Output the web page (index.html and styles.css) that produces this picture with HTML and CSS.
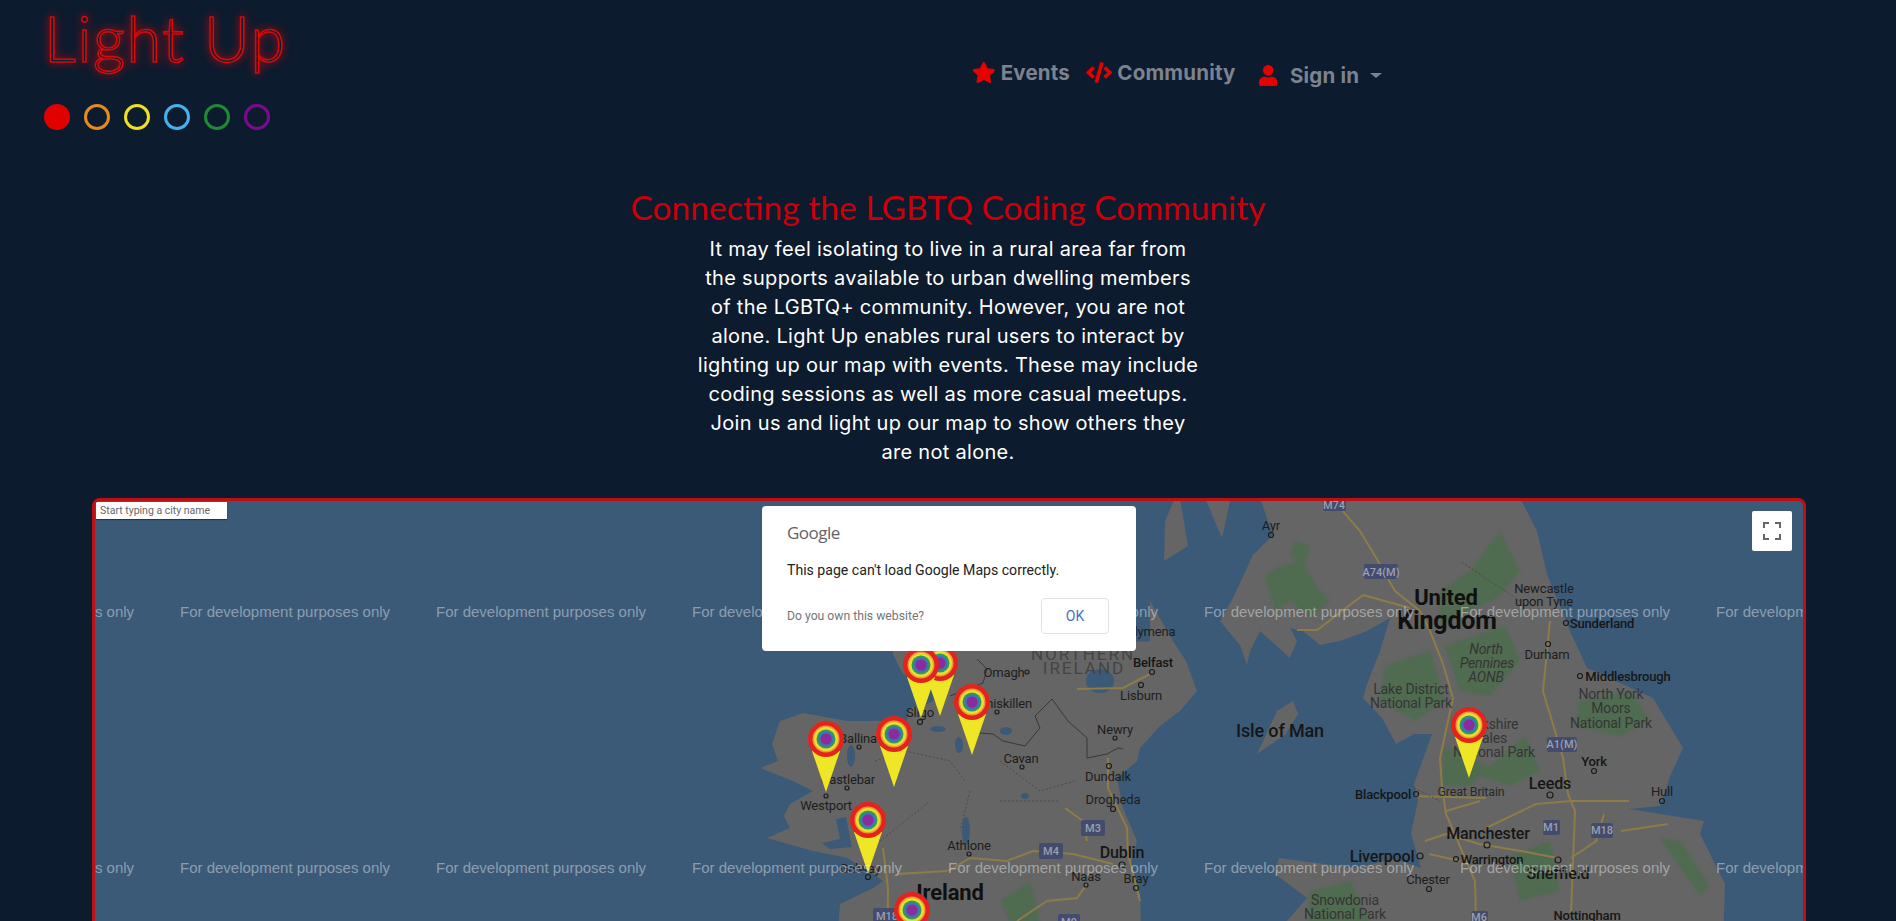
FILE: index.html
```html
<!DOCTYPE html>
<html lang="en">
<head>
    <meta charset="UTF-8">
    <title>Light Up</title>
    <link rel="stylesheet" href="styles.css">
</head>
<body>
<header class="top">
    <div class="brand">
        <h1 class="logo">Light Up</h1>
        <div class="dots">
            <span class="dot red"></span>
            <span class="dot orange"></span>
            <span class="dot yellow"></span>
            <span class="dot blue"></span>
            <span class="dot green"></span>
            <span class="dot purple"></span>
        </div>
    </div>
    <nav class="nav">
        <a class="nav-link">
            <svg class="ico ico-star" viewBox="0 0 576 512"><path d="M259.3 17.8L194 150.2 47.9 171.5c-26.2 3.8-36.7 36.1-17.7 54.6l105.7 103-25 145.5c-4.5 26.3 23.2 46 46.4 33.7L288 439.6l130.7 68.7c23.2 12.2 50.9-7.4 46.4-33.7l-25-145.5 105.7-103c19-18.5 8.5-50.8-17.7-54.6L382 150.2 316.7 17.8c-11.7-23.6-45.6-23.9-57.4 0z"/></svg>
            Events
        </a>
        <a class="nav-link">
            <svg class="ico ico-code" viewBox="0 0 640 512"><path d="M278.9 511.5l-61-17.7c-6.4-1.8-10-8.5-8.2-14.9L346.2 8.7c1.8-6.4 8.5-10 14.9-8.2l61 17.7c6.4 1.8 10 8.5 8.2 14.9L293.8 503.3c-1.9 6.4-8.5 10.1-14.9 8.2zm-114-112.2l43.5-46.4c4.6-4.9 4.3-12.7-.8-17.2L117 256l90.6-79.7c5.1-4.5 5.5-12.3.8-17.2l-43.5-46.4c-4.5-4.8-12.1-5.1-17-.5L3.8 247.2c-5.1 4.7-5.1 12.8 0 17.5l144.1 135.1c4.9 4.6 12.5 4.4 17-.5zm327.2.6l144.1-135.1c5.1-4.7 5.1-12.8 0-17.5L492.1 112.1c-4.8-4.5-12.4-4.3-17 .5L431.6 159c-4.6 4.9-4.3 12.7.8 17.2L523 256l-90.6 79.7c-5.1 4.5-5.5 12.3-.8 17.2l43.5 46.4c4.5 4.9 12.1 5.1 17 .6z"/></svg>
            Community
        </a>
        <a class="nav-link sign-in">
            <svg class="ico ico-user" viewBox="0 0 448 512"><path d="M224 256c70.7 0 128-57.3 128-128S294.7 0 224 0 96 57.3 96 128s57.3 128 128 128zm89.6 32h-16.7c-22.2 10.2-46.9 16-72.9 16s-50.6-5.8-72.9-16h-16.7C60.2 288 0 348.2 0 422.4V464c0 26.5 21.5 48 48 48h352c26.5 0 48-21.5 48-48v-41.6c0-74.2-60.2-134.4-134.4-134.4z"/></svg>
            Sign in
            <span class="caret"></span>
        </a>
    </nav>
</header>

<section class="intro">
    <h2>Connecting the LGBTQ Coding Community</h2>
    <p>
        It may feel isolating to live in a rural area far from<br>
        the supports available to urban dwelling members<br>
        of the LGBTQ+ community. However, you are not<br>
        alone. Light Up enables rural users to interact by<br>
        lighting up our map with events. These may include<br>
        coding sessions as well as more casual meetups.<br>
        Join us and light up our map to show others they<br>
        are not alone.
    </p>
</section>

<section class="map">
    <svg class="map-art" viewBox="95 500 1708 500">
        <defs>
            <g id="pin">
                <polygon class="pin-tail" points="-14,12 14,12 0,53"/>
                <circle r="18" fill="#e4241c"/>
                <circle r="13.5" fill="#ee9a35"/>
                <circle r="12" fill="#e9dd32"/>
                <circle r="9.5" fill="#2f9a5c"/>
                <circle r="7.5" fill="#3f72b4"/>
                <circle r="5.5" fill="#8c2a9e"/>
            </g>
        </defs>

        <!-- land -->
        <path class="land" d="M893 645L1173 640L1186 660L1197 690L1180 710L1160 725L1140 747L1137 760L1117 777L1123 807L1137 840L1130 867L1140 893L1143 1000L833 1000L840 903L873 887L883 880L873 873L847 857L813 850L767 837L790 827L784 815L790 803L813 790L793 780L760 767L778 760L772 743L780 720L803 712L847 720L873 720L907 720L910 707L927 703L947 693L903 673L893 653Z"/>
        <path class="land" d="M1150 600L1173 640L1150 650Z"/>
        <path class="land" d="M1260 497L1273 534L1253 554L1233 597L1220 620L1240 644L1247 664L1250 650L1260 630L1290 657L1297 640L1290 627L1303 630L1320 644L1340 640L1367 630L1390 617L1380 650L1367 683L1363 697L1382 717L1396 743L1414 733L1432 733L1414 783L1418 800L1411 833L1421 867L1395 858L1354 867L1279 857L1275 873L1307 897L1286 921L1280 1000L1721 1000L1725 883L1700 833L1704 820L1629 808L1660 805L1671 773L1683 747L1653 697L1587 667L1570 630L1547 573L1537 530L1520 497Z"/>
        <path class="land" d="M1175 497L1165 520L1164 560L1188 545L1180 497Z"/>
        <path class="land" d="M1205 497L1222 537L1230 500L1228 497Z"/>
        <path class="land" d="M1293 700L1277 710L1257 753L1286 733L1298 713Z"/>

        <!-- parks and forest -->
        <g class="parks">
            <path d="M1265 575L1280 565L1300 560L1320 590L1330 600L1310 615L1290 600L1275 610Z"/>
            <path d="M1295 540L1310 545L1305 565L1290 555Z"/>
            <path d="M1440 590L1470 570L1500 530L1520 570L1500 595L1470 610L1440 625Z"/>
            <path d="M1445 645L1505 625L1520 660L1490 695L1460 690Z"/>
            <path d="M1385 665L1430 650L1445 700L1415 720L1380 700Z"/>
            <path d="M1445 745L1490 765L1525 735L1540 770L1510 785L1480 775L1470 785L1442 785Z"/>
            <path d="M1580 700L1630 690L1650 720L1620 735L1575 725Z"/>
            <path d="M1510 855L1550 840L1560 890L1520 900Z"/>
            <path d="M1660 837L1680 840L1710 885L1700 895Z"/>
            <path d="M1310 890L1350 880L1370 921L1360 1000L1305 1000Z"/>
            <path d="M1000 900L1030 880L1040 921L1010 921Z"/>
        </g>

        <!-- lakes -->
        <ellipse class="water" cx="1100" cy="680" rx="14" ry="12"/>
        <ellipse class="water" cx="851" cy="755" rx="4" ry="11"/>
        <path class="water" d="M836 818L846 816L852 846L830 848L822 842L840 838Z"/>
        <ellipse class="water" cx="966" cy="830" rx="4" ry="14"/>
        <ellipse class="water" cx="959" cy="744" rx="4" ry="8"/>
        <ellipse class="water" cx="1006" cy="730" rx="6" ry="4"/>
        <ellipse class="water" cx="938" cy="728" rx="8" ry="3"/>
        <ellipse class="water" cx="1025" cy="795" rx="4" ry="3"/>

        <!-- roads -->
        <path class="road" d="M1065 807L1083 820L1087 840M948 870L970 857L1007 860L1033 850L1073 853L1113 863M897 873L947 870M887 1000L888 887L883 847M1017 920L1047 900L1077 897L1087 883M1108 757L1108 787L1127 827L1128 853L1140 900M1077 688L1123 687L1150 673"/>
        <path class="road" d="M1334 500L1360 530L1378 560L1395 590L1420 610L1430 630L1443 663L1453 697L1440 757L1442 787L1446 813L1475 880L1478 1000M1550 620L1543 690L1563 757L1568 793L1575 810L1571 913M1414 795L1486 797M1446 810L1480 800M1486 827L1536 803L1571 800L1629 800M1604 813L1596 840L1571 857M1425 840L1446 833L1479 843L1521 850L1557 857M1429 853L1460 860M1621 830L1668 823M1363 594L1410 607M1297 629L1317 629L1333 617L1363 594"/>
        <path class="border" d="M977 658L987 668L983 682L950 695M980 732L993 733L1003 740L1025 745L1040 727L1035 715L1052 698L1068 720L1087 737L1087 757L1107 753L1118 747L1123 748"/>
        <path class="county" d="M875 760L905 750L950 760L965 780M1000 760L1040 790L1075 780M970 790L960 830M1000 800L1060 800M880 840L930 800M1400 780L1440 800M1520 600L1460 560"/>

        <!-- town dots -->
        <g class="town">
            <circle cx="1027" cy="671" r="2"/><circle cx="1152" cy="671" r="2.5"/><circle cx="1141" cy="684" r="2.5"/><circle cx="997" cy="711" r="2"/>
            <circle cx="920" cy="721" r="2.5"/><circle cx="859" cy="746" r="2"/><circle cx="847" cy="787" r="2"/><circle cx="826" cy="795" r="2"/>
            <circle cx="1022" cy="766" r="2"/><circle cx="1115" cy="737" r="2"/><circle cx="1109" cy="765" r="2.5"/><circle cx="1113" cy="808" r="2.5"/>
            <circle cx="969" cy="853" r="2"/><circle cx="868" cy="876" r="2.5"/><circle cx="1122" cy="864" r="3"/><circle cx="1086" cy="884" r="2"/><circle cx="1136" cy="887" r="2.5"/>
            <circle cx="1271" cy="534" r="2.5"/><circle cx="1566" cy="622" r="2.5"/><circle cx="1548" cy="643" r="2.5"/><circle cx="1580" cy="675" r="2.5"/>
            <circle cx="1594" cy="770" r="2.5"/><circle cx="1550" cy="794" r="3"/><circle cx="1662" cy="800" r="2.5"/><circle cx="1416" cy="793" r="2.5"/>
            <circle cx="1487" cy="844" r="3"/><circle cx="1420" cy="855" r="3"/><circle cx="1456" cy="858" r="2.5"/><circle cx="1558" cy="859" r="3"/><circle cx="1429" cy="888" r="2.5"/>
        </g>

        <!-- road shields -->
        <g class="shields">
            <rect x="1081" y="819" width="24" height="16" rx="2"/><text x="1093" y="827">M3</text>
            <rect x="1039" y="842" width="24" height="16" rx="2"/><text x="1051" y="850">M4</text>
            <rect x="873" y="907" width="28" height="16" rx="2"/><text x="887" y="915">M18</text>
            <rect x="1058" y="913" width="22" height="16" rx="2"/><text x="1069" y="921">M9</text>
            <rect x="1323" y="497" width="23" height="13" rx="2"/><text x="1334" y="504">M74</text>
            <rect x="1364" y="563" width="34" height="15" rx="2"/><text x="1381" y="571">A74(M)</text>
            <rect x="1547" y="736" width="30" height="15" rx="2"/><text x="1562" y="743">A1(M)</text>
            <rect x="1543" y="819" width="17" height="15" rx="2"/><text x="1551" y="826">M1</text>
            <rect x="1591" y="822" width="22" height="15" rx="2"/><text x="1602" y="829">M18</text>
            <rect x="1471" y="910" width="17" height="14" rx="2"/><text x="1479" y="916">M6</text>
        </g>

        <!-- place names -->
        <g class="places">
            <text x="1004" y="671">Omagh</text><text x="1153" y="661" class="med">Belfast</text><text x="1141" y="694">Lisburn</text>
            <text x="1146" y="630">Ballymena</text><text x="1002" y="702">Enniskillen</text><text x="920" y="711">Sligo</text>
            <text x="858" y="737">Ballina</text><text x="848" y="778">Castlebar</text><text x="826" y="804">Westport</text>
            <text x="1021" y="757">Cavan</text><text x="1115" y="728">Newry</text><text x="1108" y="775">Dundalk</text>
            <text x="1113" y="798">Drogheda</text><text x="969" y="844">Athlone</text><text x="860" y="867">Galway</text>
            <text x="1086" y="875">Naas</text><text x="1136" y="877">Bray</text>
            <text x="1271" y="524">Ayr</text><text x="1544" y="587">Newcastle</text><text x="1544" y="600">upon Tyne</text>
            <text x="1602" y="622" class="med">Sunderland</text><text x="1547" y="653">Durham</text>
            <text x="1628" y="675" class="med">Middlesbrough</text><text x="1594" y="760" class="med">York</text><text x="1662" y="790">Hull</text>
            <text x="1383" y="793" class="med">Blackpool</text><text x="1471" y="790" class="thin">Great Britain</text>
            <text x="1492" y="858" class="med">Warrington</text><text x="1428" y="878">Chester</text><text x="1587" y="914" class="med">Nottingham</text>

            <text x="1122" y="851" class="city">Dublin</text><text x="1550" y="782" class="city">Leeds</text><text x="1488" y="832" class="city">Manchester</text>
            <text x="1382" y="855" class="city">Liverpool</text><text x="1558" y="872" class="city">Sheffield</text><text x="1280" y="729" class="isle">Isle of Man</text>

            <text x="950" y="891" class="country">Ireland</text><text x="1446" y="596" class="country">United</text><text x="1447" y="619" class="country wide">Kingdom</text>

            <text x="1083" y="653" class="region">NORTHERN</text><text x="1084" y="667" class="region">IRELAND</text>

            <text x="1486" y="648" class="park-name it">North</text><text x="1487" y="662" class="park-name it">Pennines</text><text x="1486" y="676" class="park-name it">AONB</text>
            <text x="1411" y="688" class="park-name">Lake District</text><text x="1411" y="702" class="park-name">National Park</text>
            <text x="1611" y="693" class="park-name">North York</text><text x="1611" y="707" class="park-name">Moors</text><text x="1611" y="722" class="park-name">National Park</text>
            <text x="1490" y="723" class="park-name">Yorkshire</text><text x="1490" y="737" class="park-name">Dales</text><text x="1494" y="751" class="park-name">National Park</text>
            <text x="1345" y="899" class="park-name">Snowdonia</text><text x="1345" y="913" class="park-name">National Park</text>
        </g>

        <!-- event pins -->
        <use href="#pin" x="940" y="662"/>
        <use href="#pin" x="921" y="664"/>
        <use href="#pin" x="972" y="701"/>
        <use href="#pin" x="826" y="738"/>
        <use href="#pin" x="894" y="733"/>
        <use href="#pin" x="868" y="819"/>
        <use href="#pin" x="912" y="909"/>
        <use href="#pin" x="1469" y="724"/>
    </svg>

    <div class="marks marks-top">
        <span>For development purposes only</span><span>For development purposes only</span><span>For development purposes only</span><span>For development purposes only</span><span>For development purposes only</span><span>For development purposes only</span><span>For development purposes only</span><span>For development purposes only</span>
    </div>
    <div class="marks marks-bottom">
        <span>For development purposes only</span><span>For development purposes only</span><span>For development purposes only</span><span>For development purposes only</span><span>For development purposes only</span><span>For development purposes only</span><span>For development purposes only</span><span>For development purposes only</span>
    </div>

    <input class="city-search" type="text" placeholder="Start typing a city name">

    <button class="fullscreen" aria-label="Toggle fullscreen view">
        <svg viewBox="0 0 18 18"><path d="M0 6V0h6v2H2v4zM12 0h6v6h-2V2h-4zM18 12v6h-6v-2h4v-4zM6 18H0v-6h2v4h4z"/></svg>
    </button>

    <div class="dialog">
        <div class="dialog-logo">Google</div>
        <div class="dialog-msg">This page can't load Google Maps correctly.</div>
        <div class="dialog-foot">
            <span class="dialog-own">Do you own this website?</span>
            <button class="dialog-ok">OK</button>
        </div>
    </div>
</section>
</body>
</html>
```

FILE: styles.css
```css
html, body {
    height: 100%;
}

body {
    margin: 0;
    overflow: hidden;
    background-color: #0d1b2e;
    font-family: Inter, "Open Sans", sans-serif;
    color: white;
}

.top {
    display: flex;
    height: 180px;
    padding-left: 44px;
}

.brand {
    width: 928px;
}

.logo {
    margin: 0;
    font-family: Lato, sans-serif;
    font-size: 63px;
    font-weight: 300;
    line-height: 76px;
    letter-spacing: 1.5px;
    color: #0d1b2e;
    -webkit-text-stroke: 1.6px #d50a0a;
    filter: drop-shadow(0 0 4px rgba(230, 0, 0, 0.75));
}

.dots {
    display: flex;
    gap: 14px;
    margin-top: 28px;
}

.dot {
    width: 26px;
    height: 26px;
    box-sizing: border-box;
    border: 3px solid;
    border-radius: 50%;
}

.red { background-color: #e00000; border-color: #e00000; }
.orange { border-color: #e58a1f; }
.yellow { border-color: #f0e020; }
.blue { border-color: #47b0ee; }
.green { border-color: #1f8a34; }
.purple { border-color: #7c0a91; }

.nav {
    display: flex;
    align-items: center;
    height: 144px;
}

.nav-link {
    display: flex;
    align-items: center;
    margin-right: 16px;
    font-size: 20.5px;
    font-weight: 700;
    letter-spacing: 0.2px;
    color: #7c838f;
}

.sign-in {
    margin-left: 7px;
    margin-right: 0;
    padding-top: 7px;
}

.ico {
    height: 21px;
    margin-right: 5px;
    fill: #e60000;
}

.ico-user {
    margin-right: 13px;
}

.caret {
    margin-left: 11px;
    border-top: 5px solid #7c838f;
    border-left: 6px solid transparent;
    border-right: 6px solid transparent;
}

.intro {
    text-align: center;
}

.intro h2 {
    margin: 6px 0 0;
    font-family: Lato, sans-serif;
    font-size: 33.6px;
    font-weight: 400;
    line-height: 42px;
    color: #c9000a;
}

.intro p {
    margin: 0;
    padding-top: 7px;
    font-size: 20px;
    letter-spacing: 0.3px;
    line-height: 29px;
}

.map {
    position: relative;
    height: 500px;
    margin: 31px 90px 0 92px;
    border: 3px solid #bd0f14;
    border-radius: 8px;
    overflow: hidden;
    background-color: #3b5a78;
}

.map-art {
    position: absolute;
    left: 0;
    top: 0;
    width: 1708px;
    height: 500px;
}

.land { fill: #656565; }
.parks { fill: #4f6b50; filter: blur(1.5px); }
.water { fill: #3b5a78; }
.road { fill: none; stroke: #8d7c48; stroke-width: 2; }
.border { fill: none; stroke: #383838; stroke-width: 1; }
.county { fill: none; stroke: #4c4c4c; stroke-width: 1; stroke-dasharray: 2 2; }
.town circle { fill: none; stroke: #1c1c1c; stroke-width: 1.2; }
.pin-tail { fill: #efe626; }

.shields rect { fill: #434c6c; }

.shields text {
    font-family: Roboto, sans-serif;
    font-size: 11px;
    font-weight: 500;
    fill: #9a9fb0;
    text-anchor: middle;
    dominant-baseline: central;
}

.places text {
    font-family: Roboto, sans-serif;
    font-size: 13px;
    letter-spacing: -0.15px;
    fill: #1d1d1d;
    text-anchor: middle;
    dominant-baseline: central;
}

.places .med { font-weight: 500; fill: #161616; }
.places .thin { font-size: 12.5px; fill: #2a2a2a; }
.places .city { font-size: 16px; font-weight: 500; fill: #161616; }
.places .isle { font-size: 18px; font-weight: 500; fill: #161616; }
.places .country { font-size: 22px; font-weight: 700; fill: #101010; }
.places .wide { font-size: 25px; }
.places .region { font-size: 17px; letter-spacing: 2px; fill: #444; }
.places .park-name { font-size: 14px; fill: #353535; }
.places .it { font-style: italic; }

.marks {
    position: absolute;
    left: -171px;
    display: flex;
    gap: 48px;
    font-family: "Liberation Sans", Arial, sans-serif;
    font-size: 15px;
    white-space: nowrap;
    color: rgba(255, 255, 255, 0.42);
}

.marks span {
    width: 208px;
    flex: none;
}

.marks-top { top: 102px; }
.marks-bottom { top: 358px; }

.city-search {
    position: absolute;
    left: 1px;
    top: 1px;
    width: 131px;
    height: 17px;
    box-sizing: border-box;
    padding: 0 4px;
    border: none;
    border-radius: 0;
    box-shadow: 0 1px 1px rgba(0, 0, 0, 0.4);
    background-color: white;
    font-family: Roboto, sans-serif;
    font-size: 10.5px;
}

.city-search::placeholder {
    color: #666;
    opacity: 1;
}

.fullscreen {
    position: absolute;
    left: 1657px;
    top: 10px;
    display: flex;
    align-items: center;
    justify-content: center;
    width: 40px;
    height: 40px;
    padding: 0;
    border: none;
    border-radius: 2px;
    background-color: white;
}

.fullscreen svg {
    width: 18px;
    height: 18px;
    fill: #666;
}

.dialog {
    position: absolute;
    left: 667px;
    top: 5px;
    width: 374px;
    height: 145px;
    box-sizing: border-box;
    padding: 15px 27px 0 25px;
    border-radius: 4px;
    background-color: white;
    font-family: Roboto, sans-serif;
}

.dialog-logo {
    font-family: "Open Sans", sans-serif;
    font-size: 17px;
    line-height: 24px;
    letter-spacing: -0.5px;
    color: #5f6368;
}

.dialog-msg {
    margin-top: 15px;
    font-size: 14.1px;
    line-height: 20px;
    color: #222;
}

.dialog-foot {
    display: flex;
    align-items: center;
    justify-content: space-between;
    margin-top: 18px;
}

.dialog-own {
    font-size: 12.2px;
    color: #757575;
}

.dialog-ok {
    width: 68px;
    height: 36px;
    padding: 0;
    border: 1px solid #e2e2e2;
    border-radius: 4px;
    background-color: white;
    font-family: Roboto, sans-serif;
    font-size: 14px;
    color: #4a6fc9;
}
```
